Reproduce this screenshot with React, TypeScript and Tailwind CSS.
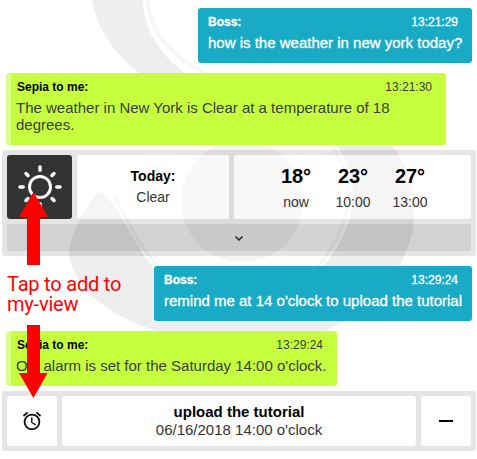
import React from "react";

const font = "font-['Liberation_Sans',Arial,sans-serif]";

function Watermark({ place = "inset-0" }: { place?: string }) {
  return (
    <svg className={`pointer-events-none absolute max-w-none ${place}`} width="477" height="459" viewBox="0 0 477 459">
      <path d="M92 0C97 28 115 55 139 73H185C160 55 143 28 143 0Z" fill="#eeeeee" />
      <path d="M147.500 0C150 31 171 58 205 73" fill="none" stroke="#f6f6f6" strokeWidth="4" />
      <path
        d="M98 192C86 205 69 235 69 258C78 294 115 318 157 331H325L345 321C385 296 414 255 414 215C414 187 406 164 392 145H336C360 176 360 222 326 263C300 290 200 300 152 266C133 245 116 196 98 192Z"
        fill="#eeeeee"
      />
      <circle cx="242" cy="201" r="61" fill="#f4f4f4" />
      <path d="M331 145C355 176 356 222 318 266M115 197C126 220 140 247 159 267" fill="none" stroke="#f5f5f5" strokeWidth="3" />
    </svg>
  );
}

type BubbleProps = { sender: string; time: string; text: string; mine?: boolean; size: string };

function Bubble({ sender, time, text, mine, size }: BubbleProps) {
  return (
    <div
      className={`${size} rounded-[3px] ${
        mine
          ? "ml-auto mr-[5px] bg-[#19abc5] px-[10px] text-white [-webkit-text-stroke:0.3px_white]"
          : "ml-[6px] border-l-[5px] border-[#daff8c] bg-[#c5ff3d] pl-[5px] pr-[14px] text-[#3c3c3c]"
      }`}
    >
      <div className={`flex justify-between pt-[7px] text-[12px] leading-[14px] ${mine ? "pr-[4px]" : "pl-[1px]"}`}>
        <b className={mine ? "" : "text-black"}>{sender}</b>
        <span>{time}</span>
      </div>
      <p className="mt-[5px] whitespace-pre text-[15px] leading-[17px]">{text}</p>
    </div>
  );
}

function Temp({ value, label }: { value: string; label: string }) {
  return (
    <div className="w-[57px] text-center">
      <div className="text-[20px] font-bold leading-[24px] text-black">{value}</div>
      <div className="mt-[6px] text-[14px] leading-[16px]">{label}</div>
    </div>
  );
}

export default function App() {
  return (
    <div className={`relative h-[459px] w-[477px] overflow-hidden bg-white ${font}`}>
      <Watermark />
      <main className="relative flex flex-col pt-[8px] text-[#333]">
        <Bubble mine sender="Boss:" time="13:21:29" text="how is the weather in new york today?" size="h-[55px] w-[274px]" />
        <div className="h-[10px]" />
        <Bubble
          sender="Sepia to me:"
          time="13:21:30"
          text={"The weather in New York is Clear at a temperature of 18\ndegrees."}
          size="h-[72px] w-[440px]"
        />
        <section className="ml-[2px] mt-[5px] flex h-[106px] w-[474px] flex-col gap-[5px] rounded-[3px] bg-black/10 p-[5px]">
          <div className="flex h-[64px] gap-[5px]">
            <div className="w-[65px] rounded-[3px] bg-[#333]">
              <svg width="65" height="64" viewBox="0 0 65 64" fill="none" stroke="white">
                <circle cx="33" cy="32" r="10.5" strokeWidth="2.9" />
                <path
                  d="M33 12v3.200M33 48.800V52M13 32h3.200M49.800 32H53M19 18.500l2 2M45 43.500L47 45.500M47 18.500l-2 2M21 43.500L19 45.500"
                  strokeWidth="3.5"
                  strokeLinecap="round"
                />
              </svg>
            </div>
            <div className="relative w-[152px] overflow-hidden rounded-[3px] bg-white">
              <div className="absolute inset-0 opacity-60">
                <Watermark place="-left-[77px] -top-[155px]" />
              </div>
              <div className="relative pt-[12px] text-center text-[14px] leading-[18px]">
                <b className="block text-black">Today:</b>
                <span className="mt-[3px] block">Clear</span>
              </div>
            </div>
            <div className="relative w-[237px] overflow-hidden rounded-[3px] bg-white">
              <div className="absolute inset-0 opacity-60">
                <Watermark place="-left-[234px] -top-[155px]" />
              </div>
              <div className="relative flex justify-center pl-[1px] pt-[9px]">
                <Temp value="18°" label="now" />
                <Temp value="23°" label="10:00" />
                <Temp value="27°" label="13:00" />
              </div>
            </div>
          </div>
          <div className="flex h-[27px] items-center justify-center bg-[rgba(20,20,45,0.09)]">
            <svg width="10" height="8" viewBox="0 0 10 8" fill="none" stroke="#222" strokeWidth="1.5">
              <path d="M1.500 2.500L5 6L8.500 2.500" />
            </svg>
          </div>
        </section>
        <div className="h-[10px]" />
        <Bubble mine sender="Boss:" time="13:29:24" text="remind me at 14 o'clock to upload the tutorial" size="h-[55px] w-[318px]" />
        <div className="h-[10px]" />
        <Bubble sender="Sepia to me:" time="13:29:24" text="Ok, alarm is set for the Saturday 14:00 o'clock." size="h-[55px] w-[331px]" />
        <section className="ml-[2px] mt-[5px] flex h-[60px] w-[474px] gap-[5px] rounded-[3px] bg-[#e5e5e5] p-[5px]">
          <div className="flex w-[50px] items-center justify-center rounded-[3px] bg-white">
            <svg width="22" height="22" viewBox="0 0 24 24" fill="#111">
              <path d="M22 5.720l-4.600-3.860-1.290 1.530 4.600 3.860L22 5.720zM7.880 3.390L6.600 1.860 2 5.710l1.290 1.530 4.590-3.850zM12.500 8H11v6l4.750 2.850.75-1.230-4-2.370V8zM12 4c-4.970 0-9 4.030-9 9s4.020 9 9 9a9 9 0 0 0 0-18zm0 16c-3.870 0-7-3.130-7-7s3.130-7 7-7 7 3.130 7 7-3.130 7-7 7z" />
            </svg>
          </div>
          <div className="w-[354px] rounded-[3px] bg-white pt-[7px] text-center text-[15px] leading-[18px]">
            <b className="block text-black">upload the tutorial</b>
            <span className="block">06/16/2018 14:00 o'clock</span>
          </div>
          <div className="flex w-[50px] items-center justify-center rounded-[3px] bg-white">
            <div className="h-[2px] w-[14px] bg-black" />
          </div>
        </section>
      </main>
      <svg className="pointer-events-none absolute inset-0" width="477" height="459" viewBox="0 0 477 459" fill="#f00">
        <path d="M33.500 192L48 217H40V265H27V217H19ZM27 325H40V373H47.500L33.500 398L19 373H27Z" />
      </svg>
      <div className="absolute left-[7px] top-[274px] whitespace-nowrap font-['Roboto',sans-serif] text-[20px] leading-[20px] tracking-[-0.2px] text-[#f00]">
        Tap to add to
        <br />
        my-view
      </div>
    </div>
  );
}
